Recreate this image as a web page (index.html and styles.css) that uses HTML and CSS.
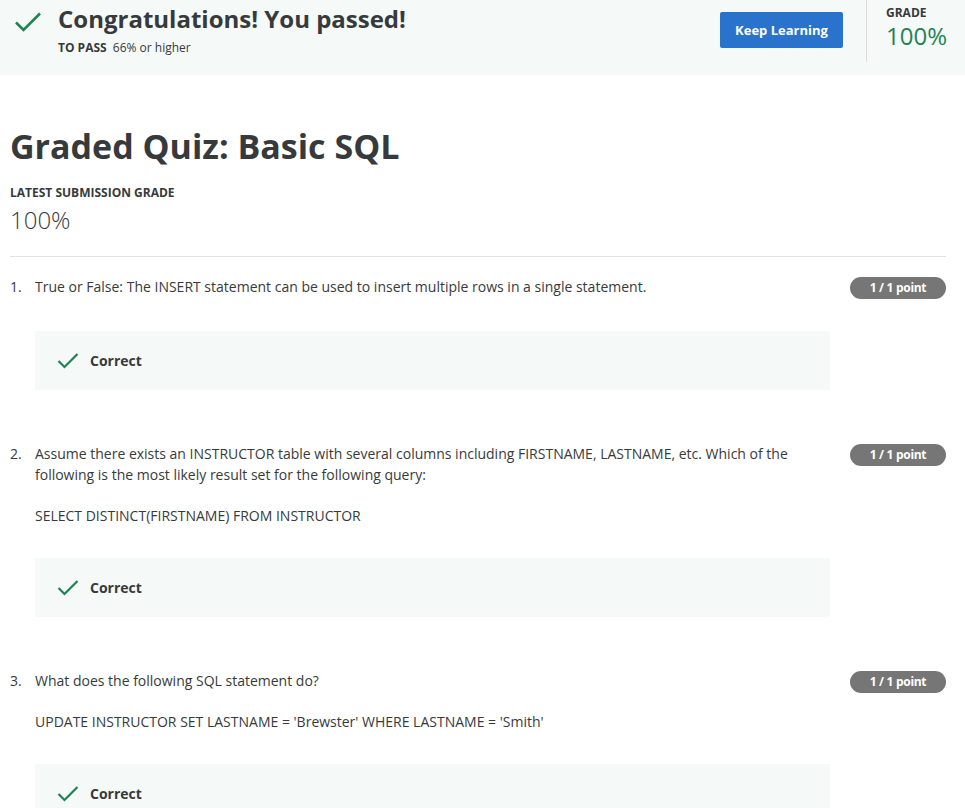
FILE: index.html
```html
<!DOCTYPE html>
<html>
<head>
<meta charset="utf-8">
<link rel="stylesheet" href="styles.css">
</head>
<body>
<header class="banner">
  <div class="banner-left">
    <svg class="big-check" width="28" height="22" viewBox="0 0 28 22"><path d="M2 11.5 L9.5 19 L26 2.5" fill="none" stroke="#1f8354" stroke-width="2.6"/></svg>
    <div>
      <h2 class="congrats">Congratulations! You passed!</h2>
      <div class="topass"><b>TO PASS</b> 66% or higher</div>
    </div>
  </div>
  <button class="keep">Keep Learning</button>
  <div class="grade-box">
    <div class="grade-label">GRADE</div>
    <div class="grade-val">100%</div>
  </div>
</header>
<main class="content">
  <h1 class="title">Graded Quiz: Basic SQL</h1>
  <div class="latest-label">LATEST SUBMISSION GRADE</div>
  <div class="latest-val">100%</div>
  <hr class="sep">

  <section class="q">
    <div class="q-row">
      <span class="q-num">1.</span>
      <div class="q-text"><p>True or False: The INSERT statement can be used to insert multiple rows in a single statement.</p></div>
      <span class="badge">1 / 1 point</span>
    </div>
    <div class="correct"><svg width="22" height="17" viewBox="0 0 22 17"><path d="M1.5 9 L7.5 15 L20.5 2" fill="none" stroke="#1f8354" stroke-width="2.2"/></svg><span>Correct</span></div>
  </section>

  <section class="q">
    <div class="q-row">
      <span class="q-num">2.</span>
      <div class="q-text"><p>Assume there exists an INSTRUCTOR table with several columns including FIRSTNAME, LASTNAME, etc. Which of the following is the most likely result set for the following query:</p><p class="sql">SELECT DISTINCT(FIRSTNAME) FROM INSTRUCTOR</p></div>
      <span class="badge">1 / 1 point</span>
    </div>
    <div class="correct"><svg width="22" height="17" viewBox="0 0 22 17"><path d="M1.5 9 L7.5 15 L20.5 2" fill="none" stroke="#1f8354" stroke-width="2.2"/></svg><span>Correct</span></div>
  </section>

  <section class="q">
    <div class="q-row">
      <span class="q-num">3.</span>
      <div class="q-text"><p>What does the following SQL statement do?</p><p class="sql">UPDATE INSTRUCTOR SET LASTNAME = 'Brewster' WHERE LASTNAME = 'Smith'</p></div>
      <span class="badge">1 / 1 point</span>
    </div>
    <div class="correct"><svg width="22" height="17" viewBox="0 0 22 17"><path d="M1.5 9 L7.5 15 L20.5 2" fill="none" stroke="#1f8354" stroke-width="2.2"/></svg><span>Correct</span></div>
  </section>
</main>
</body>
</html>
```

FILE: styles.css
```css
* { box-sizing: border-box; }
body {
  margin: 0;
  font-family: "Open Sans", "Noto Sans", sans-serif;
  color: #373a3c;
  background: #fff;
  overflow: hidden;
}
.banner {
  height: 75px;
  background: #f5f9f8;
  display: flex;
  align-items: flex-start;
}
.banner-left {
  flex: 1;
  display: flex;
  align-items: flex-start;
  padding-left: 14px;
  padding-top: 3px;
}
.big-check { margin-top: 8px; margin-right: 16px; }
.congrats {
  margin: 0;
  font-size: 24px;
  font-weight: 700;
  line-height: 32px;
  color: #373a3c;
}
.topass {
  font-size: 12px;
  margin-top: 5px;
  line-height: 16px;
  color: #373a3c;
}
.topass b { font-weight: 700; margin-right: 3px; }
.keep {
  margin-top: 12px;
  margin-right: 23px;
  width: 123px;
  height: 36px;
  background: #2a73cc;
  border: none;
  border-radius: 2px;
  color: #fff;
  font-family: "Open Sans", sans-serif;
  font-weight: 700;
  font-size: 13px;
  padding: 0;
}
.grade-box {
  width: 99px;
  height: 62px;
  border-left: 1px solid #dcdcdc;
  padding-left: 19px;
  padding-top: 5px;
}
.grade-label { font-size: 12px; font-weight: 700; line-height: 16px; color: #373a3c; }
.grade-val { font-size: 24px; line-height: 30px; color: #1f8354; font-weight: 400; }

.content { padding: 0 19px 0 10px; }
.title {
  margin: 0;
  padding-top: 47px;
  font-size: 34px;
  font-weight: 700;
  line-height: 48px;
  color: #373a3c;
}
.latest-label { margin-top: 15px; font-size: 12px; font-weight: 700; line-height: 16px; }
.latest-val { margin-top: 4px; font-size: 24px; font-weight: 300; line-height: 30px; color: #373a3c; }
.sep { margin: 21px 0 0; border: 0; border-top: 1px solid #e1e1e1; }
.q { padding-top: 19px; margin-bottom: 34px; }
.q-row { display: flex; align-items: flex-start; }
.q-num { width: 25px; font-size: 14px; line-height: 21px; }
.q-text { flex: 1; font-size: 14px; line-height: 21px; padding-right: 40px; }
.q-text p { margin: 0; }
.q-text .sql { margin-top: 20px; }
.badge {
  margin-top: 1px;
  width: 96px;
  height: 22px;
  border-radius: 11px;
  background: #767676;
  color: #fff;
  font-size: 12px;
  font-weight: 700;
  line-height: 22px;
  text-align: center;
  letter-spacing: -0.3px;
}
.correct {
  margin: 32px 0 0 25px;
  width: 795px;
  height: 59px;
  background: #f5f9f8;
  display: flex;
  align-items: center;
  padding-left: 22px;
}
.correct svg { margin-right: 11px; }
.correct span { font-size: 14px; font-weight: 700; color: #373a3c; }
```
